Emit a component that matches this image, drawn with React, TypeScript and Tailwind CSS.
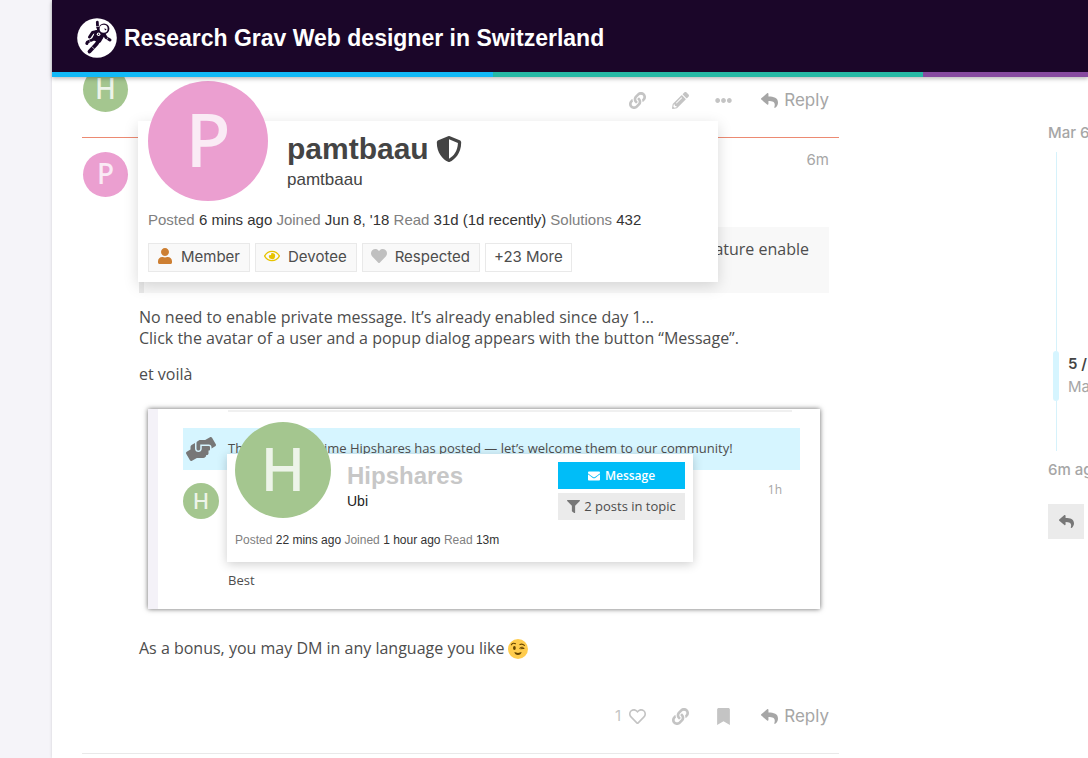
import type { ReactNode } from "react";
import {
  FaBookmark,
  FaEllipsisH,
  FaEnvelope,
  FaFilter,
  FaHandsHelping,
  FaHeart,
  FaLink,
  FaPencilAlt,
  FaRegEye,
  FaRegHeart,
  FaReply,
  FaShieldAlt,
  FaUser,
} from "react-icons/fa";

function Astronaut() {
  return (
    <svg viewBox="0 0 40 40" className="size-10 shrink-0" role="img" aria-label="Grav">
      <circle cx="20" cy="20" r="19.8" fill="#fff" />
      <g fill="none" stroke="#1b0629" strokeLinecap="round" strokeLinejoin="round">
        <path d="M20.3 4.2 L20.6 9 L22 13" strokeWidth="2.8" />
        <path d="M20 13.500 L15.5 14.500 L12.500 19" strokeWidth="3" />
        <path d="M26.500 15 L29 19.500 L33 22" strokeWidth="3" />
        <path d="M19 17 L16 21.500 L10.500 24 L9.800 25.500" strokeWidth="3" />
        <path d="M24 19 L19.500 26 L12.500 33.5" strokeWidth="3.8" />
        <path d="M19.500 14 L26 17 L22.500 23 L17.500 21 Z" strokeWidth="3.4" fill="#1b0629" />
      </g>
      <circle cx="27" cy="10.800" r="5.4" fill="#1b0629" />
      <circle cx="26.600" cy="10.800" r="4" fill="#fff" />
      <path d="M27 10.5l2.600.5-1.200 1.600z" fill="#1b0629" />
      <circle cx="21.6" cy="16.2" r="1.800" fill="#fff" />
      <circle cx="21.6" cy="16.2" r=".7" fill="#1b0629" />
      <path d="M12.500 22.500l1.500 3M19 8.500h3.500M29.500 22l1.500-2.500M14.500 28.500l3 2.500" stroke="#fff" strokeWidth=".6" />
    </svg>
  );
}

function Wink() {
  return (
    <svg viewBox="0 0 36 36" className="ml-1 inline-block size-5 align-text-bottom" role="img" aria-label="wink">
      <circle cx="18" cy="18" r="18" fill="#ffcc4d" />
      <ellipse cx="11.5" cy="16" rx="2.5" ry="3.6" fill="#664500" />
      <g fill="none" stroke="#664500" strokeLinecap="round">
        <path d="M6 10.5C8 7 11 7 13.5 8.500" strokeWidth="2" />
        <path d="M21.500 10C25 8 28 10 29.500 11.500" strokeWidth="2" />
        <path d="M21 16.500C24 13.500 27.500 14.500 29 17L23 17.500" strokeWidth="1.800" />
      </g>
      <path d="M11.500 23.500C15 25.500 21 25.500 24.500 23.500C24 27 21.500 29 18 29S12 27 11.500 23.500Z" fill="#664500" />
    </svg>
  );
}

function IconButton({ label, children }: { label: string; children: ReactNode }) {
  return (
    <button aria-label={label} className="flex h-8 w-[43px] items-center justify-center text-[17px] text-[#c4c4c4]">
      {children}
    </button>
  );
}

function ReplyButton() {
  return (
    <button className="ml-4 flex h-8 items-center gap-[6px] text-[17px] text-[#a6a6a6]">
      <FaReply />
      <span className="pt-[2px]">Reply</span>
    </button>
  );
}

function Stat({ label, value }: { label: string; value: string }) {
  return (
    <span>
      <span className="text-[#808080]">{label}</span> {value}{" "}
    </span>
  );
}

function Badge({ icon, children }: { icon: ReactNode; children: ReactNode }) {
  return (
    <a href="#badges" className="flex h-[29px] items-center gap-2 border border-[#e9e9e9] bg-[#f9f9f9] pr-[9px] pl-2 text-[15px]">
      <span className="-mt-1">{icon}</span>
      {children}
    </a>
  );
}

function UserCard() {
  return (
    <section className="absolute top-[-17px] left-[56px] z-10 h-[161px] w-[580px] bg-white px-[10px] shadow-[0_4px_14px_rgba(0,0,0,0.15)]">
      <div className="flex gap-[19px]">
        <div className="-mt-10 flex size-[120px] shrink-0 items-center justify-center rounded-full bg-[#eb9fd0] pb-1 font-['Noto_Sans'] text-[74px] leading-none font-medium text-[#faebf5]">
          P
        </div>
        <div className="pt-[10px] font-['Liberation_Sans',sans-serif] text-[#444]">
          <h2 className="flex items-center gap-[7px] text-[30px] leading-[36px] font-bold">
            pamtbaau
            <FaShieldAlt className="size-[26px]" />
          </h2>
          <div className="text-[17px] leading-[26px]">pamtbaau</div>
        </div>
      </div>
      <p className="mt-[9px] font-['Liberation_Sans',sans-serif] text-[15px] leading-5 whitespace-nowrap text-[#333]">
        <Stat label="Posted" value="6 mins ago" />
        <Stat label="Joined" value="Jun 8, '18" />
        <Stat label="Read" value="31d (1d recently)" />
        <Stat label="Solutions" value="432" />
      </p>
      <div className="mt-[13px] flex gap-[5px]">
        <Badge icon={<FaUser className="size-4 text-[#cd7f32]" />}>Member</Badge>
        <Badge icon={<FaRegEye className="size-4 text-[#e7c300]" />}>Devotee</Badge>
        <Badge icon={<FaHeart className="size-4 text-[#c0c0c0]" />}>Respected</Badge>
        <a href="#more" className="flex h-[29px] items-center border border-[#e9e9e9] px-2 text-[15px]">
          +23 More
        </a>
      </div>
    </section>
  );
}

function Preview() {
  return (
    <figure className="relative mr-[9px] ml-[9px] h-[200px] border-l-[10px] border-[#f4f2f8] bg-white pr-5 pl-[25px] font-['Open_Sans',sans-serif] text-[13px] shadow-[0_0_5px_rgba(0,0,0,0.6)]">
      <div className="mr-2 ml-[45px] h-[3px] border-b-2 border-[#f0f0f0]" />
      <div className="mt-4 flex h-[42px] items-center bg-[#d6f5ff] pl-[3px]">
        <FaHandsHelping className="mr-3 size-[30px] shrink-0 text-[#777]" />
        <span className="whitespace-nowrap">This is the first time Hipshares has posted — let’s welcome them to our community!</span>
      </div>
      <div className="mt-[13px] flex justify-between pr-[18px]">
        <div className="flex size-9 items-center justify-center rounded-full bg-[#a4c68f] pb-[2px] font-['Noto_Sans'] text-[22px] leading-none font-medium text-[#edf4e9]">
          H
        </div>
        <span className="text-[12px] leading-[14px] text-[#a6a6a6]">1h</span>
      </div>
      <p className="mt-[52px] pl-[45px] leading-[18px]">Best</p>
      <div className="absolute top-[45px] left-[69px] h-[108px] w-[466px] bg-white px-2 shadow-[0_2px_10px_rgba(0,0,0,0.2)]">
        <div className="flex">
          <div className="-mt-8 flex size-24 shrink-0 items-center justify-center rounded-full bg-[#a4c68f] pb-1 font-['Noto_Sans'] text-[60px] leading-none font-medium text-[#edf4e9]">
            H
          </div>
          <div className="ml-4 flex-1 pt-2 font-['Liberation_Sans',sans-serif]">
            <h3 className="text-2xl leading-7 font-bold text-[#c7c7c7]">Hipshares</h3>
            <div className="text-[14px] leading-[22px] text-[#222]">Ubi</div>
          </div>
          <div className="flex w-[127px] flex-col gap-1 pt-2">
            <button className="flex h-[27px] items-center justify-center gap-[5px] bg-[#00bdf8] text-[12px] font-semibold text-white">
              <FaEnvelope />
              Message
            </button>
            <button className="flex h-[27px] items-center justify-center gap-1 bg-[#ebebeb] whitespace-nowrap">
              <FaFilter className="size-[13px] text-[#777]" />2 posts in topic
            </button>
          </div>
        </div>
        <p className="mt-3 font-['Liberation_Sans',sans-serif] text-[12px] leading-4 text-[#333]">
          <Stat label="Posted" value="22 mins ago" />
          <Stat label="Joined" value="1 hour ago" />
          <Stat label="Read" value="13m" />
        </p>
      </div>
    </figure>
  );
}

export default function App() {
  return (
    <div className="flex min-h-screen overflow-hidden bg-[#f5f4f9] pl-[52px] font-['Inter',sans-serif] text-[15px] text-[#4d4d4d]">
      <div className="min-w-0 flex-1 bg-white shadow-[0_0_3px_rgba(0,0,0,0.15)]">
        <header className="relative z-20 shadow-[0_2px_4px_rgba(0,0,0,0.25)]">
          <div className="flex h-[72px] items-center gap-[7px] bg-[#1b0629] px-[25px] pt-1">
            <Astronaut />
            <h1 className="font-['Liberation_Sans',sans-serif] text-[23px] leading-8 font-bold whitespace-nowrap text-white">
              Research Grav Web designer in Switzerland
            </h1>
          </div>
          <div className="flex h-[5px]">
            <div className="w-[441px] bg-[#12b9f7]" />
            <div className="w-[430px] bg-[#27b9a5]" />
            <div className="flex-1 bg-[#874ba0]" />
          </div>
        </header>
        <main className="flex justify-between pl-[30px]">
          <div className="w-[757px]">
            <article className="flex h-[60px] pr-[10px] pl-px">
              <div className="-mt-[10px] flex size-[45px] items-center justify-center rounded-full bg-[#a4c68f] pb-[3px] font-['Noto_Sans'] text-[28px] leading-none font-medium text-[#edf4e9]">
                H
              </div>
              <div className="ml-auto flex h-8 pt-[7px]">
                <IconButton label="Share link"><FaLink /></IconButton>
                <IconButton label="Edit"><FaPencilAlt /></IconButton>
                <IconButton label="More"><FaEllipsisH /></IconButton>
                <ReplyButton />
              </div>
            </article>
            <article className="relative flex gap-[11px] border-t border-b border-t-[#ec8a72] border-b-[#e9e9e9] pt-[14px] pr-[10px] pb-[21px] pl-px">
              <div className="flex size-[45px] shrink-0 items-center justify-center rounded-full bg-[#eb9fd0] pb-[3px] font-['Noto_Sans'] text-[28px] leading-none font-medium text-[#faebf5]">
                P
              </div>
              <UserCard />
              <div className="min-w-0 flex-1">
                <div className="text-right leading-4 text-[#a6a6a6]">6m</div>
                <blockquote className="mt-[59px] h-[66px] border-l-[5px] border-[#e9e9e9] bg-[#f8f8f8] px-5 py-3 text-right font-['Open_Sans',sans-serif] text-base leading-[21px]">
                  feature enable
                </blockquote>
                <div className="font-['Open_Sans',sans-serif] text-base leading-[21px]">
                  <p className="mt-[14px]">
                    No need to enable private message. It’s already enabled since day 1…
                    <br />
                    Click the avatar of a user and a popup dialog appears with the button “Message”.
                  </p>
                  <p className="mt-[15px] mb-6">et voilà</p>
                </div>
                <Preview />
                <p className="mt-[29px] font-['Open_Sans',sans-serif] text-base leading-[21px]">
                  As a bonus, you may DM in any language you like
                  <Wink />
                </p>
                <div className="mt-[41px] flex justify-end">
                  <button className="flex h-8 items-center gap-2 pr-[13px] text-[17px] text-[#c4c4c4]" aria-label="1 like">
                    <span className="text-[15px]">1</span>
                    <FaRegHeart />
                  </button>
                  <IconButton label="Share link"><FaLink /></IconButton>
                  <IconButton label="Bookmark"><FaBookmark /></IconButton>
                  <ReplyButton />
                </div>
              </div>
            </article>
          </div>
          <aside className="w-10 pt-[46px] font-medium whitespace-nowrap text-[#a6a6a6]">
            <div className="leading-5">Mar 6</div>
            <div className="mt-[9px] flex h-[299px]">
              <div className="flex w-5 shrink-0 flex-col items-center pr-1">
                <div className="h-[199px] w-px bg-[#d6f2fb]" />
                <div className="h-[50px] w-[6px] shrink-0 rounded-full bg-[#d6f5ff]" />
                <div className="h-[50px] w-px bg-[#d6f2fb]" />
              </div>
              <div className="pt-[200px] leading-[23px]">
                <div className="font-semibold text-[#444]">5 / 5</div>
                <div className="font-normal">Mar 6</div>
              </div>
            </div>
            <div className="mt-[9px] leading-5">6m ago</div>
            <button aria-label="Reply" className="mt-6 flex h-[35px] w-9 items-center justify-center bg-[#ebebeb] text-[#777]">
              <FaReply />
            </button>
          </aside>
        </main>
      </div>
    </div>
  );
}
